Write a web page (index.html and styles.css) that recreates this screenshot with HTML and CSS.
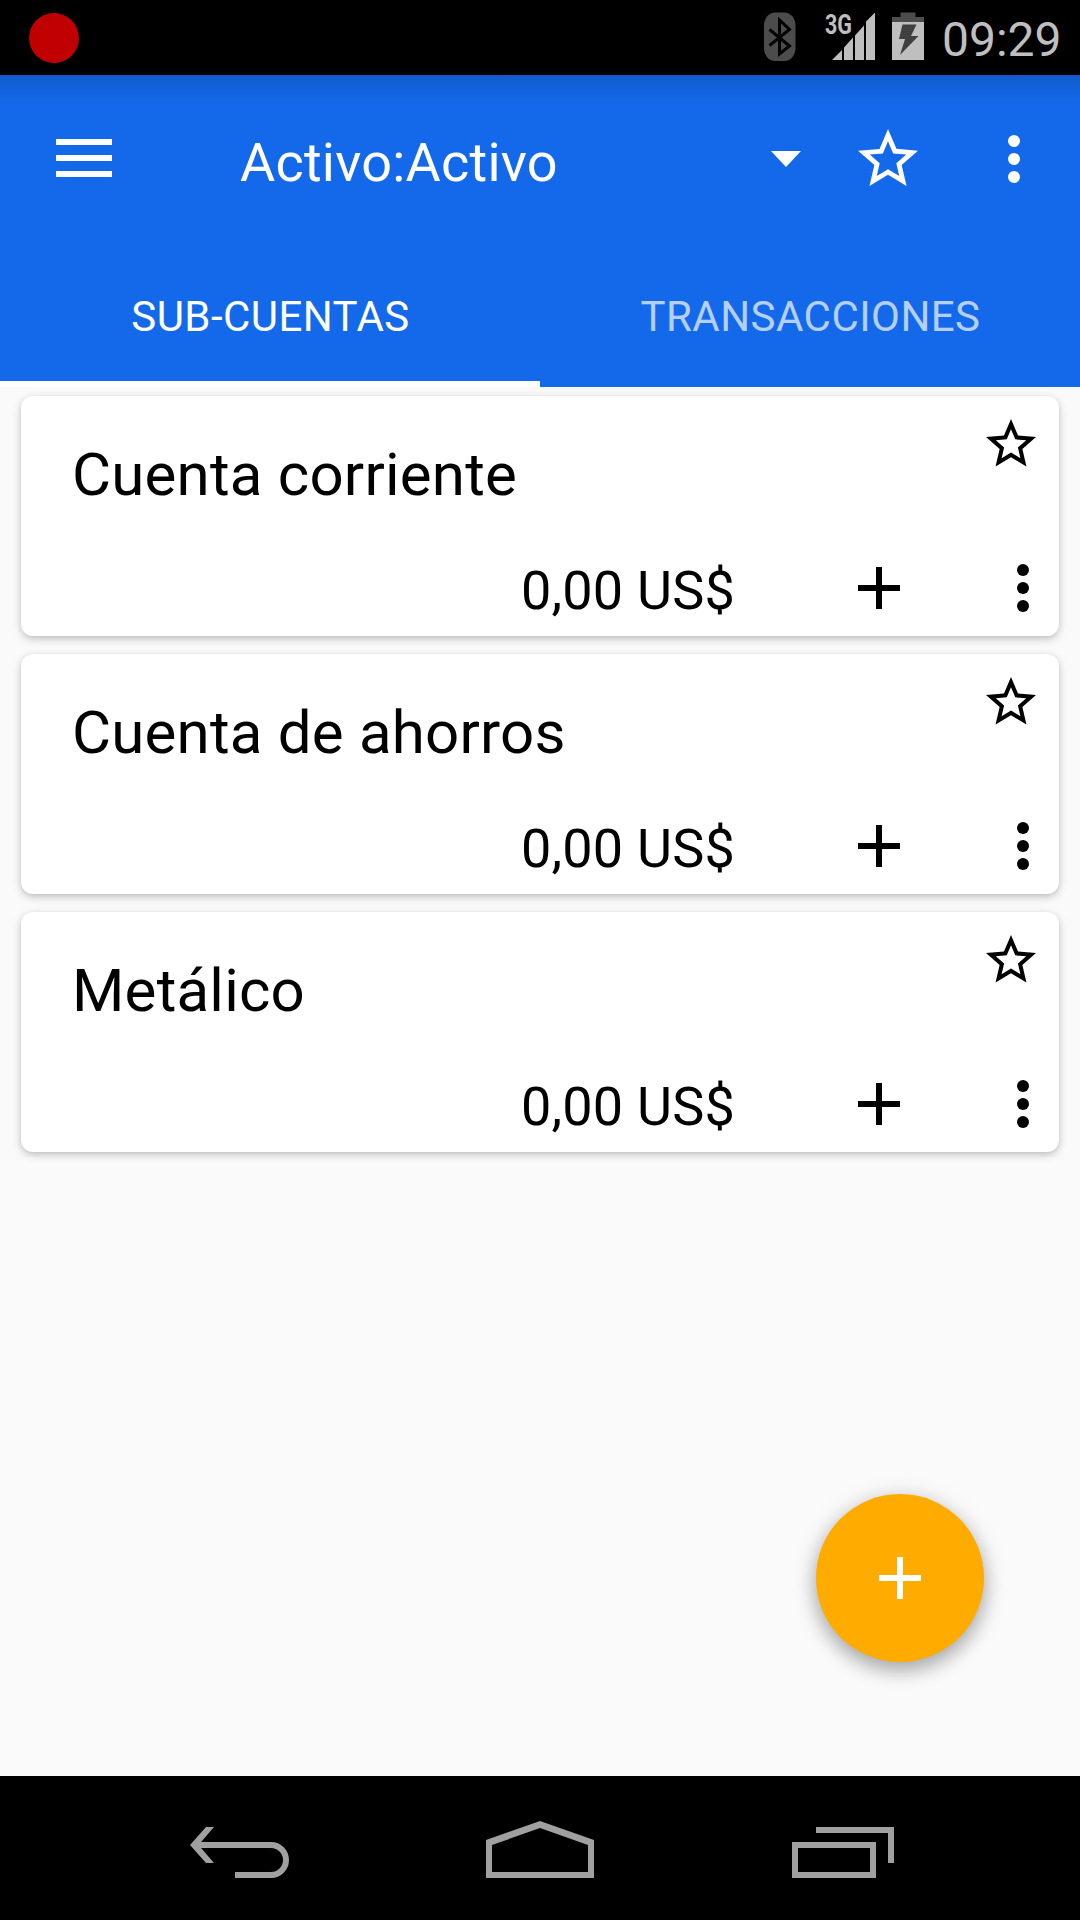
FILE: index.html
```
<!DOCTYPE html>
<html lang="es">
<head>
<meta charset="utf-8">
<title>Activo:Activo</title>
<link rel="stylesheet" href="styles.css">
</head>
<body>
<svg class="sprite" aria-hidden="true">
  <symbol id="star" viewBox="0 0 24 24"><path d="M22 9.24l-7.19-.62L12 2 9.19 8.63 2 9.24l5.46 4.73L5.82 21 12 17.27 18.18 21l-1.63-7.03L22 9.24zM12 15.4l-3.76 2.27 1-4.28-3.32-2.88 4.38-.38L12 6.1l1.71 4.04 4.38.38-3.32 2.88 1 4.28L12 15.4z"/></symbol>
  <symbol id="more" viewBox="0 0 24 24"><circle cx="12" cy="6" r="2"/><circle cx="12" cy="12" r="2"/><circle cx="12" cy="18" r="2"/></symbol>
  <symbol id="plus" viewBox="0 0 24 24"><path d="M19 13h-6v6h-2v-6H5v-2h6V5h2v6h6z"/></symbol>
</svg>
<div class="screen">
  <header class="status">
    <span class="record"></span>
    <div class="status-icons">
      <svg class="bt" width="32" height="50" viewBox="0 0 32 50"><rect x="0" y="0.5" width="31.5" height="48.5" rx="11" ry="13" fill="#4c4c4c"/><path d="M5.500 17.500L25.500 34 15.500 42V8L25.500 17.500 5.500 33.500" fill="none" stroke="#000" stroke-width="3"/></svg>
      <svg class="signal" width="56" height="56" viewBox="-6 -6 56 56" fill="#bfbfbf"><text class="net" x="0" y="21.500" textLength="27" lengthAdjust="spacingAndGlyphs">3G</text><path d="M7 48L17 38V48zM19 48V35.500L28 25.500V48zM30 48V23.500L39 13.500V48zM41 48V9.500L50 0.500V48z"/></svg>
      <svg class="battery" width="32" height="50" viewBox="0 0 32 50"><path fill="#4c4c4c" d="M8.500 0.500H23.500V5H32V10H0V5H8.500z"/><path fill="#bfbfbf" d="M0 10H32V48H0z"/><path fill="#404040" d="M10.500 12.500H24.500L19 24H26.500L8 43 13 27H7z"/></svg>
      <span class="clock">09:29</span>
    </div>
  </header>
  <div class="appbar">
    <div class="toolbar">
      <svg width="72" height="72" viewBox="0 0 72 72"><path d="M8 16h56v6H8zM8 32h56v6H8zM8 48h56v6H8z"/></svg>
      <h1 class="title">Activo:Activo</h1>
      <svg class="caret" width="30" height="16" viewBox="0 0 30 16"><path d="M0 0h30L15 16z"/></svg>
      <svg class="bar-star" width="72" height="72"><use href="#star"/></svg>
      <svg width="72" height="72"><use href="#more"/></svg>
    </div>
    <nav class="tabs">
      <div class="tab active">SUB-CUENTAS</div>
      <div class="tab">TRANSACCIONES</div>
    </nav>
  </div>
  <main class="list">
    <article class="card">
      <div class="card-top"><h2 class="name">Cuenta corriente</h2><svg width="60" height="60"><use href="#star"/></svg></div>
      <div class="card-bottom"><span class="amount">0,00 US$</span><svg class="add" width="72" height="72"><use href="#plus"/></svg><svg width="72" height="72"><use href="#more"/></svg></div>
    </article>
    <article class="card">
      <div class="card-top"><h2 class="name">Cuenta de ahorros</h2><svg width="60" height="60"><use href="#star"/></svg></div>
      <div class="card-bottom"><span class="amount">0,00 US$</span><svg class="add" width="72" height="72"><use href="#plus"/></svg><svg width="72" height="72"><use href="#more"/></svg></div>
    </article>
    <article class="card">
      <div class="card-top"><h2 class="name">Metálico</h2><svg width="60" height="60"><use href="#star"/></svg></div>
      <div class="card-bottom"><span class="amount">0,00 US$</span><svg class="add" width="72" height="72"><use href="#plus"/></svg><svg width="72" height="72"><use href="#more"/></svg></div>
    </article>
  </main>
  <footer class="navbar">
    <svg width="100" height="58" viewBox="0 0 100 58"><path d="M0 25L16 7H24L8.500 25 24 43H16z"/><path class="line" d="M8 25H81a15 15 0 0 1 0 30H45"/></svg>
    <svg class="home" width="108" height="58" viewBox="0 0 108 58"><path fill-rule="evenodd" d="M0 20L54 1 108 20V58H0zM6 25V52H102V25L54 8z"/></svg>
    <svg width="104" height="58" viewBox="0 0 104 58"><path fill-rule="evenodd" d="M0 22H84V58H0zM6 28V52H78V28zM24 7H102V43H96V13H24z"/></svg>
  </footer>
  <button class="fab" aria-label="Añadir"><svg width="72" height="72"><use href="#plus"/></svg></button>
</div>
</body>
</html>
```
FILE: styles.css
```
* { box-sizing: border-box; margin: 0; }
body { font-family: Roboto, sans-serif; background: #fafafa; }
svg { display: block; flex: none; }
.sprite { display: none; }
.screen { position: relative; width: 1080px; height: 1920px; display: flex; flex-direction: column; overflow: hidden; }

.status { height: 75px; background: #000; display: flex; justify-content: space-between; align-items: flex-start; padding: 12px 21px 0 29px; }
.record { width: 50px; height: 50px; margin-top: 1px; border-radius: 50%; background: #c00000; }
.status-icons { display: flex; align-items: flex-start; }
.bt { margin-right: 23px; }
.signal { margin: -6px 17px 0 0; overflow: visible; }
.battery { margin-right: 18px; }
.net { font: 700 28px Roboto, sans-serif; }
.clock { width: 117px; font-size: 48px; line-height: 56px; color: #bfbfbf; white-space: nowrap; }

.appbar { height: 312px; color: #fff; background: linear-gradient(#125acb 0, #1467e7 24px, #1469eb 36px); }
.appbar svg { fill: #fff; }
.toolbar { height: 168px; display: flex; align-items: center; padding: 0 30px 0 48px; }
.title { flex: 1; margin: 7px 0 0 120px; font-size: 54px; font-weight: 400; line-height: 64px; letter-spacing: .23px; }
.caret { margin: -1px 51px 0 0; }
.bar-star { margin-right: 54px; }
.tabs { height: 144px; display: flex; }
.tab { flex: 1; display: flex; align-items: center; justify-content: center; padding: 10px 0 0 1px; border-bottom: 6px solid transparent; font-size: 42px; line-height: 50px; letter-spacing: .45px; color: rgba(255,255,255,.7); }
.tab.active { color: #fff; border-bottom-color: #fff; }

.list { flex: 1; display: flex; flex-direction: column; gap: 18px; padding: 9px 21px; }
.card { height: 240px; background: #fff; border-radius: 12px; box-shadow: 0 3px 8px rgba(0,0,0,.22), 0 1px 4px rgba(0,0,0,.05); display: flex; flex-direction: column; justify-content: space-between; }
.card-top { display: flex; justify-content: space-between; align-items: flex-start; padding: 18px 18px 0 51px; }
.name { margin-top: 26px; font-size: 60px; font-weight: 400; line-height: 70px; letter-spacing: .22px; color: #000; }
.card-bottom { display: flex; align-items: center; justify-content: flex-end; padding-bottom: 12px; }
.amount { font-size: 54px; line-height: 64px; letter-spacing: .2px; margin: 6px 108px 0 0; }
.add { margin-right: 72px; }

.navbar { height: 144px; background: #000; display: flex; align-items: flex-start; justify-content: space-between; padding: 44px 184px 0 190px; }
.navbar svg { fill: #a0a0a0; }
.navbar .home { margin-left: -2px; }
.navbar .line { fill: none; stroke: #a0a0a0; stroke-width: 6; }

.fab { position: absolute; left: 816px; top: 1494px; width: 168px; height: 168px; padding: 0; border: 0; border-radius: 50%; background: #ffab00; display: flex; align-items: center; justify-content: center; box-shadow: 0 8px 18px rgba(0,0,0,.24), 0 5px 22px 4px rgba(0,0,0,.12); }
.fab svg { fill: #fff; }
```
